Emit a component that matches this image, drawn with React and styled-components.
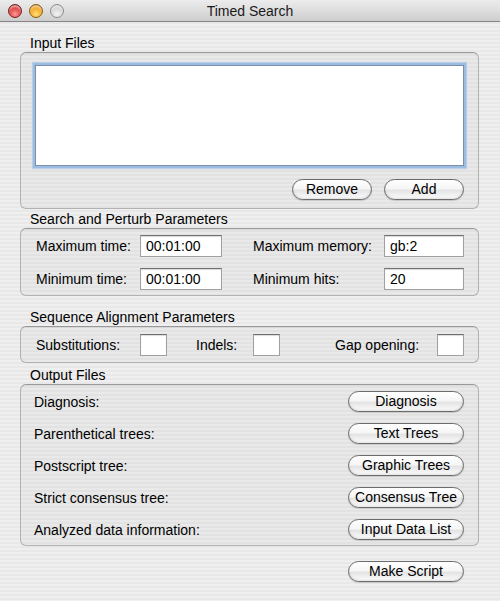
import React from "react";
import styled, { createGlobalStyle } from "styled-components";

const Global = createGlobalStyle`
  html, body { margin: 0; padding: 0; }
  body { font-family: "Liberation Sans", Arial, sans-serif; font-size: 14px; color: #000; }
  * { box-sizing: border-box; }
`;

const Window = styled.div`
  width: 500px;
  height: 601px;
  display: flex;
  flex-direction: column;
  background: repeating-linear-gradient(
    to bottom,
    #efefef 0px,
    #efefef 2px,
    #e8e8e8 2px,
    #e8e8e8 4px
  );
  overflow: hidden;
`;

const TitleBar = styled.div`
  height: 22px;
  flex: none;
  display: flex;
  align-items: center;
  position: relative;
  background: linear-gradient(to bottom, #ececec 0%, #dedede 50%, #cdcdcd 100%);
  border-bottom: 1px solid #858585;
`;

const Lights = styled.div`
  display: flex;
  gap: 7px;
  padding-left: 8px;
`;

const Light = styled.span`
  width: 14px;
  height: 14px;
  border-radius: 50%;
  border: 1px solid ${(p) => p.$edge};
  background: radial-gradient(circle at 50% 75%, ${(p) => p.$glow} 0%, ${(p) => p.$base} 60%, ${(p) => p.$dark} 100%);
  box-shadow: inset 0 2px 2px rgba(255, 255, 255, 0.6);
`;

const Title = styled.div`
  position: absolute;
  left: 0;
  right: 0;
  text-align: center;
  font-size: 14px;
  line-height: 22px;
  color: #1a1a1a;
  pointer-events: none;
`;

const Content = styled.div`
  padding: 13px 21px 0 20px;
  display: flex;
  flex-direction: column;
`;

const Section = styled.div`
  margin-top: ${(p) => p.$top || 0}px;
  display: flex;
  flex-direction: column;
`;

const SectionLabel = styled.div`
  height: 17px;
  line-height: 17px;
  padding-left: 10px;
  font-size: 14px;
`;

const GroupBox = styled.div`
  border: 1px solid #b2b2b2;
  border-top-color: #999;
  border-radius: 6px;
  background: rgba(0, 0, 0, 0.025);
  box-shadow: inset 0 1px 1px rgba(0, 0, 0, 0.06);
  padding: ${(p) => p.$pad};
`;

const ListArea = styled.div`
  height: 101px;
  background: #fff;
  border: 1px solid #7d8fa8;
  box-shadow: 0 0 0 2px #9bbde3, 0 0 1px 3px rgba(140, 180, 225, 0.45);
`;

const ButtonRow = styled.div`
  display: flex;
  justify-content: flex-end;
  gap: 12px;
  margin-top: 13px;
`;

const PillButton = styled.button`
  width: ${(p) => p.$w || 80}px;
  height: 21px;
  padding: 0;
  border-radius: 11px;
  border: 1px solid #6c6c6c;
  background: linear-gradient(to bottom, #ffffff 0%, #f6f6f6 45%, #e4e4e4 55%, #f4f4f4 85%, #ffffff 100%);
  box-shadow: inset 0 -1px 2px rgba(0, 0, 0, 0.12), 0 1px 1px rgba(0, 0, 0, 0.15);
  font-family: "Liberation Sans", Arial, sans-serif;
  font-size: 14px;
  color: #000;
  line-height: 19px;
  text-align: center;
  white-space: nowrap;
`;

const ParamGrid = styled.div`
  display: grid;
  grid-template-columns: 104px 82px 162px 80px;
  row-gap: 11px;
  align-items: center;
`;

const FieldLabel = styled.span`
  font-size: 14px;
  white-space: nowrap;
  padding-left: ${(p) => p.$indent || 0}px;
`;

const TextField = styled.div`
  height: 22px;
  width: ${(p) => (p.$w ? `${p.$w}px` : "auto")};
  background: #fff;
  border: 1px solid #a0a0a0;
  border-top-color: #6f6f6f;
  box-shadow: inset 0 1px 1px rgba(0, 0, 0, 0.15);
  padding-left: 5px;
  font-size: 14px;
  line-height: 20px;
`;

const AlignRow = styled.div`
  display: flex;
  align-items: center;
`;

const AlignLabel = styled.span`
  width: ${(p) => p.$w}px;
  margin-left: ${(p) => p.$ml || 0}px;
  font-size: 14px;
  white-space: nowrap;
`;

const OutputList = styled.div`
  display: flex;
  flex-direction: column;
  gap: 11px;
`;

const OutputRow = styled.div`
  display: flex;
  align-items: center;
  justify-content: space-between;
`;

const Footer = styled.div`
  display: flex;
  justify-content: flex-end;
  padding-right: 15px;
  margin-top: 15px;
`;

const outputs = [
  ["Diagnosis:", "Diagnosis"],
  ["Parenthetical trees:", "Text Trees"],
  ["Postscript tree:", "Graphic Trees"],
  ["Strict consensus tree:", "Consensus Tree"],
  ["Analyzed data information:", "Input Data List"],
];

export default function App() {
  return (
    <>
      <Global />
      <Window>
        <TitleBar>
          <Lights>
            <Light $edge="#7a1b1b" $base="#d8393a" $glow="#ff9a96" $dark="#8c1a1a" />
            <Light $edge="#8a5a10" $base="#f0a21c" $glow="#ffe07a" $dark="#a5620a" />
            <Light $edge="#8d8d8d" $base="#d2d2d2" $glow="#f4f4f4" $dark="#a8a8a8" />
          </Lights>
          <Title>Timed Search</Title>
        </TitleBar>
        <Content>
          <Section>
            <SectionLabel>Input Files</SectionLabel>
            <GroupBox $pad="12px 14px 8px 14px">
              <ListArea />
              <ButtonRow>
                <PillButton $w={80}>Remove</PillButton>
                <PillButton $w={80}>Add</PillButton>
              </ButtonRow>
            </GroupBox>
          </Section>

          <Section $top={2}>
            <SectionLabel>Search and Perturb Parameters</SectionLabel>
            <GroupBox $pad="6px 14px 5px 15px">
              <ParamGrid>
                <FieldLabel>Maximum time:</FieldLabel>
                <TextField>00:01:00</TextField>
                <FieldLabel $indent={31}>Maximum memory:</FieldLabel>
                <TextField>gb:2</TextField>
                <FieldLabel>Minimum time:</FieldLabel>
                <TextField>00:01:00</TextField>
                <FieldLabel $indent={31}>Minimum hits:</FieldLabel>
                <TextField>20</TextField>
              </ParamGrid>
            </GroupBox>
          </Section>

          <Section $top={13}>
            <SectionLabel>Sequence Alignment Parameters</SectionLabel>
            <GroupBox $pad="7px 14px 6px 15px">
              <AlignRow>
                <AlignLabel $w={104}>Substitutions:</AlignLabel>
                <TextField $w={27} />
                <AlignLabel $w={57} $ml={29}>Indels:</AlignLabel>
                <TextField $w={27} />
                <AlignLabel $w={102} $ml={55}>Gap opening:</AlignLabel>
                <TextField $w={27} />
              </AlignRow>
            </GroupBox>
          </Section>

          <Section $top={4}>
            <SectionLabel>Output Files</SectionLabel>
            <GroupBox $pad="6px 14px 5px 13px">
              <OutputList>
                {outputs.map(([label, btn]) => (
                  <OutputRow key={btn}>
                    <FieldLabel>{label}</FieldLabel>
                    <PillButton $w={116}>{btn}</PillButton>
                  </OutputRow>
                ))}
              </OutputList>
            </GroupBox>
          </Section>

          <Footer>
            <PillButton $w={116}>Make Script</PillButton>
          </Footer>
        </Content>
      </Window>
    </>
  );
}
